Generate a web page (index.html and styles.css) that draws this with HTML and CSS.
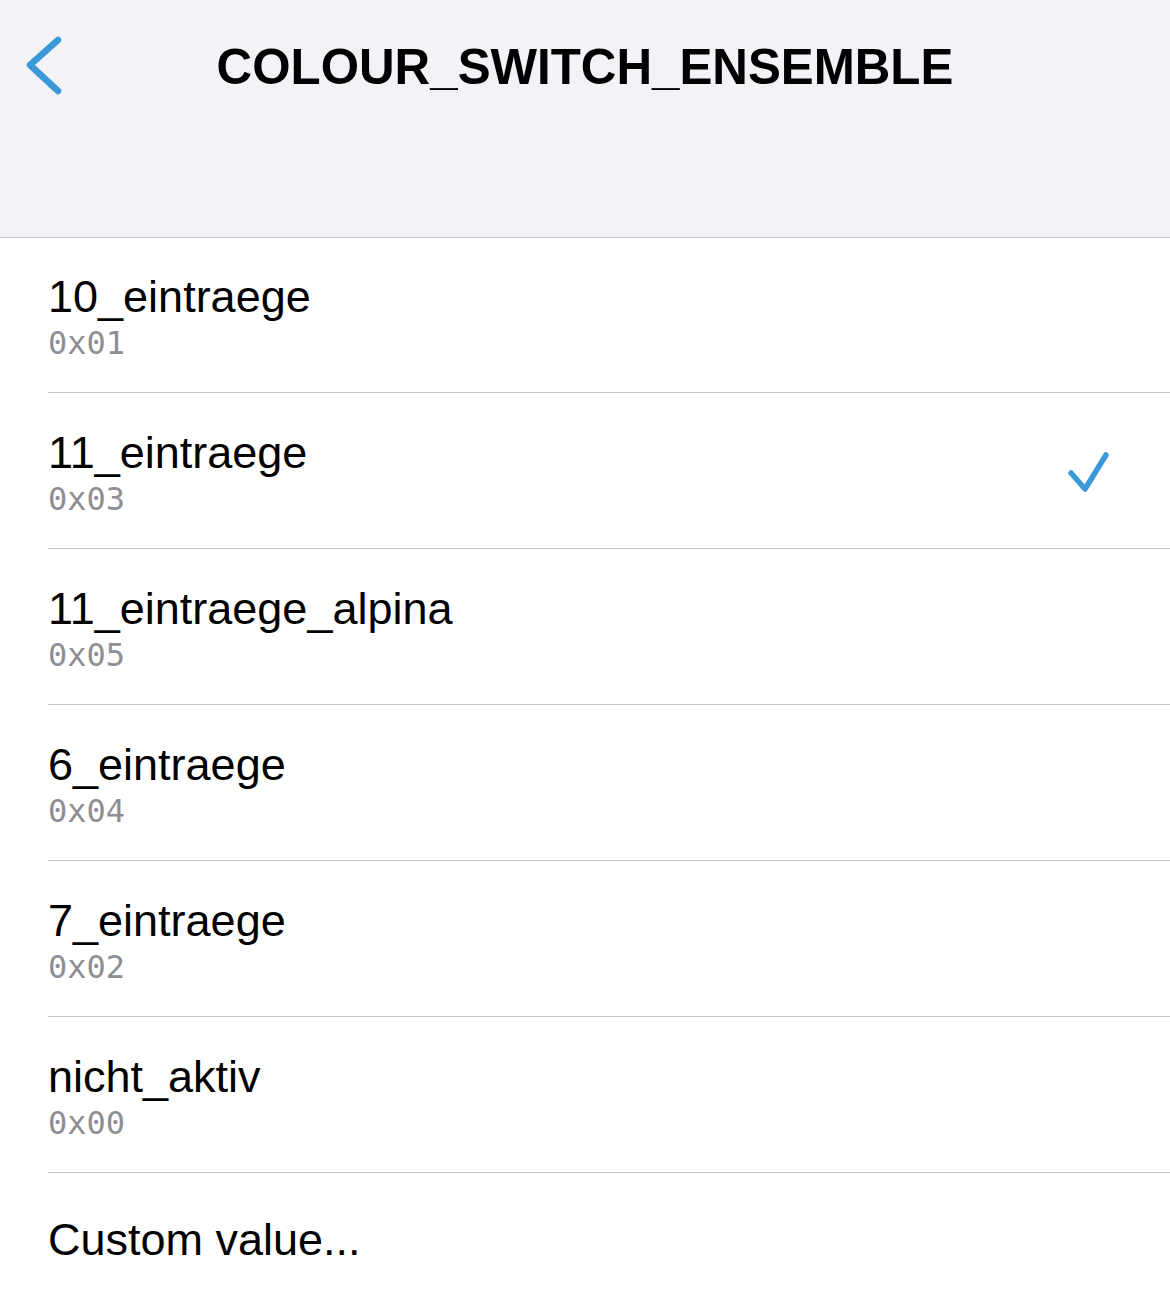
FILE: index.html
```html
<!DOCTYPE html>
<html>
<head>
<meta charset="utf-8">
<link rel="stylesheet" href="styles.css">
</head>
<body>
<header class="nav">
  <div class="nav-bar">
    <svg class="back" width="50" height="70" viewBox="0 0 50 70"><path d="M38 10 L10 35 L38 61" fill="none" stroke="#3a9ad9" stroke-width="6.5" stroke-linecap="round" stroke-linejoin="round"/></svg>
    <h1 class="title">COLOUR_SWITCH_ENSEMBLE</h1>
  </div>
</header>
<ul class="list">
  <li class="row"><div class="cell"><div class="text"><div class="name">10_eintraege</div><div class="code">0x01</div></div></div></li>
  <li class="row"><div class="cell"><div class="text"><div class="name">11_eintraege</div><div class="code">0x03</div></div>
    <svg class="check" width="50" height="50" viewBox="0 0 50 50"><path d="M12 27 L26 43 L47 9" fill="none" stroke="#3a9ad9" stroke-width="5.5" stroke-linecap="round" stroke-linejoin="round"/></svg></div></li>
  <li class="row"><div class="cell"><div class="text"><div class="name">11_eintraege_alpina</div><div class="code">0x05</div></div></div></li>
  <li class="row"><div class="cell"><div class="text"><div class="name">6_eintraege</div><div class="code">0x04</div></div></div></li>
  <li class="row"><div class="cell"><div class="text"><div class="name">7_eintraege</div><div class="code">0x02</div></div></div></li>
  <li class="row"><div class="cell"><div class="text"><div class="name">nicht_aktiv</div><div class="code">0x00</div></div></div></li>
  <li class="row"><div class="cell single"><div class="text"><div class="name">Custom value...</div></div></div></li>
</ul>
</body>
</html>
```
FILE: styles.css
```css
* { box-sizing: border-box; }
html, body { margin: 0; padding: 0; background: #fff; }
body { font-family: "Liberation Sans", Arial, sans-serif; color: #000; width: 1170px; }
.nav {
  height: 238px;
  background: #f2f2f7;
  border-bottom: 1px solid #c8c8cc;
}
.nav-bar {
  position: relative;
  height: 130px;
  display: flex;
  align-items: flex-start;
  justify-content: center;
}
.back { position: absolute; left: 20px; top: 30px; }
.title {
  margin: 0;
  padding-top: 38px;
  font-size: 49.3px;
  font-weight: 700;
  line-height: 58px;
  letter-spacing: 0;
}
.list { list-style: none; margin: 0; padding: 0; }
.row { padding-left: 48px; }
.cell {
  height: 156px;
  border-bottom: 1px solid #c8c8cc;
  display: flex;
  align-items: center;
  justify-content: space-between;
  padding-right: 60px;
}
.row:first-child .cell { height: 155px; }
.text { display: flex; flex-direction: column; padding-top: 4px; }
.name { font-size: 45px; line-height: 52px; }
.code { font-family: "DejaVu Sans Mono", monospace; font-size: 32px; line-height: 40px; color: #8e8e93; }
.check { margin-right: 1px; }
.single { height: 134px; border-bottom: none; }
.single .text { padding-top: 0; }
```
